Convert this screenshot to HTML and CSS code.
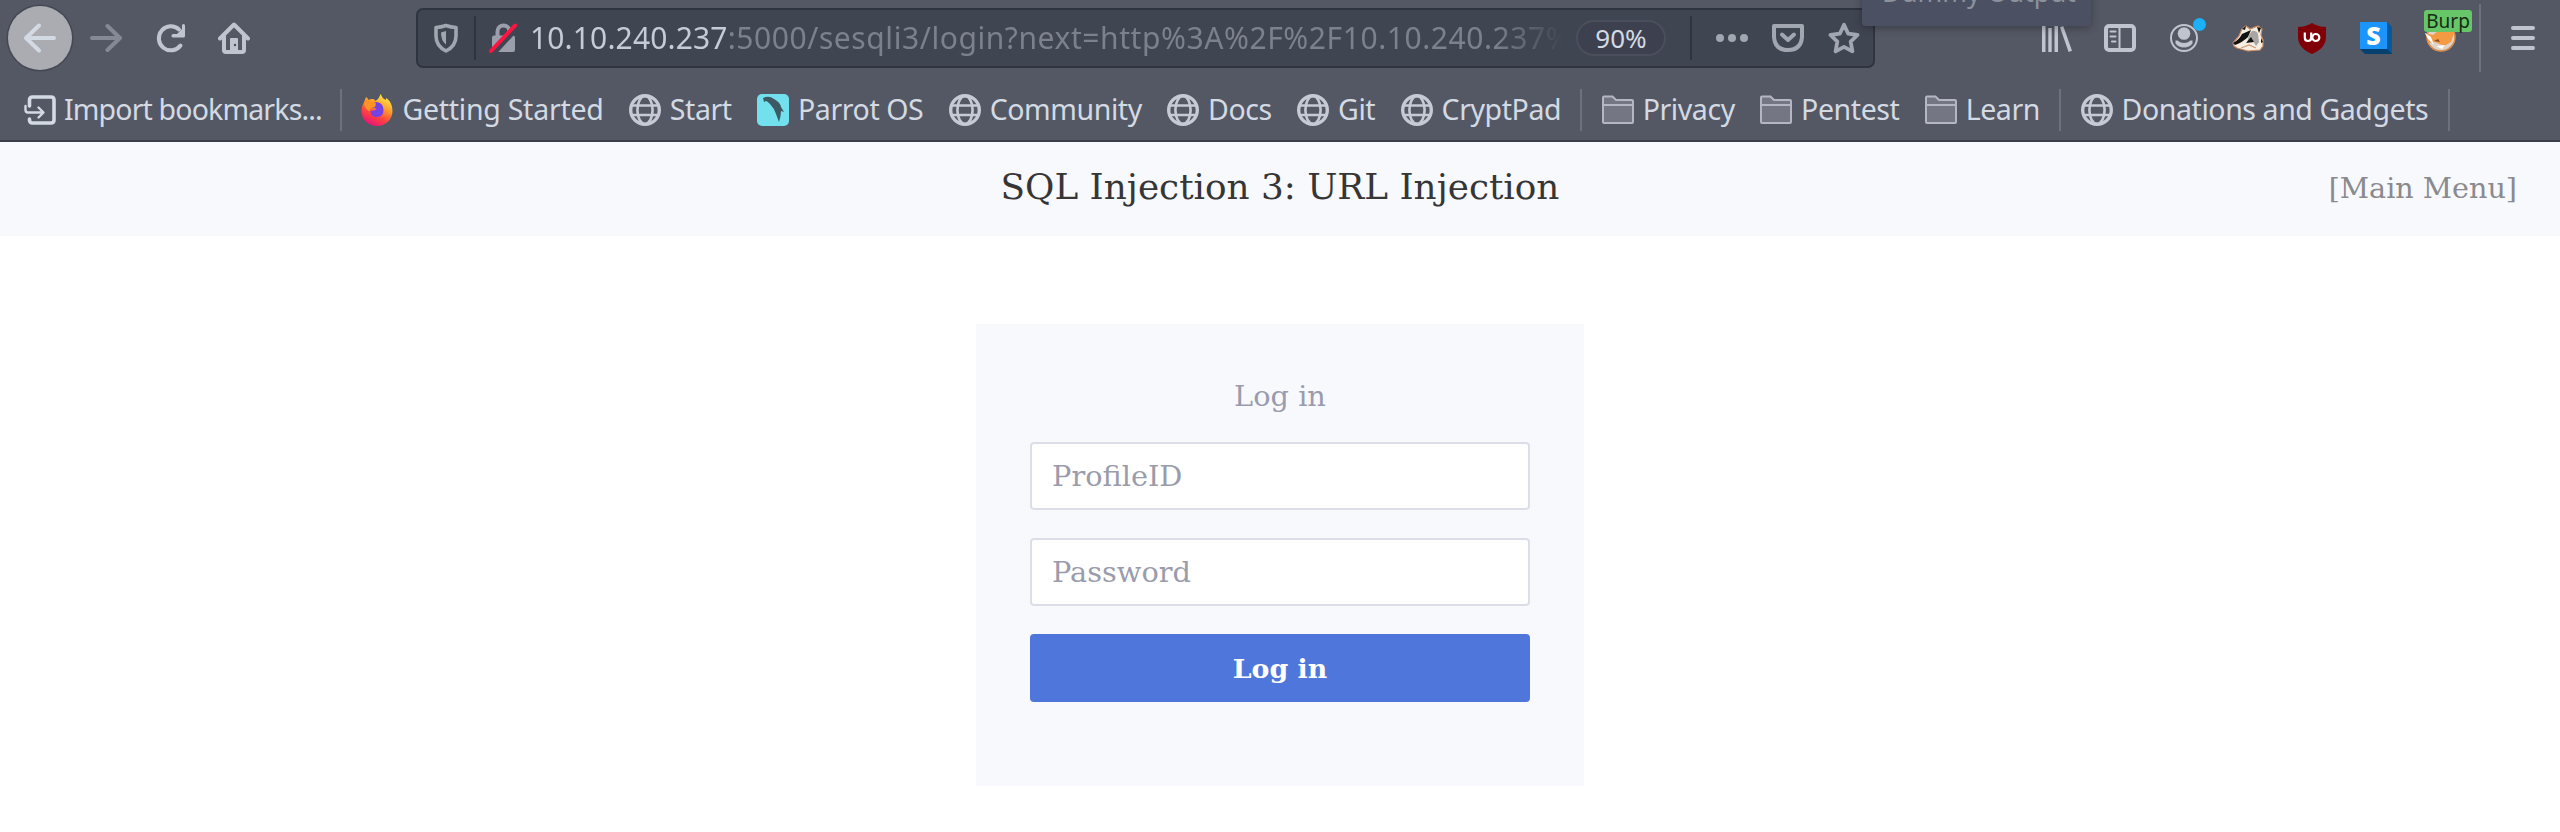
FILE: index.html
```html
<!DOCTYPE html>
<html lang="en">
<head>
<meta charset="utf-8">
<title>SQL Injection 3: URL Injection</title>
<link rel="stylesheet" href="styles.css">
</head>
<body>
<svg class="defs" width="0" height="0" aria-hidden="true">
  <symbol id="globe" viewBox="0 0 32 32"><g fill="none" stroke="currentColor"><circle cx="16" cy="16" r="14.3" stroke-width="3.4"/><ellipse cx="16" cy="16" rx="7.6" ry="14" stroke-width="2.6"/><path d="M2 11.500h28M2 21h28" stroke-width="2.400"/></g></symbol>
  <symbol id="folder" viewBox="0 0 32 32"><path d="M1 28V3.500q0-1 1-1h8.500l3.500 3.500h16q1 0 1 1V28q0 1-1 1H2q-1 0-1-1z" fill="#747783"/><path d="M1 28V3.500q0-1 1-1h8.500l3.500 3.500h16q1 0 1 1V28q0 1-1 1H2q-1 0-1-1zM1 11h30" fill="none" stroke="#b4b7c2" stroke-width="2"/></symbol>
</svg>
<header class="chrome">
  <div class="toolbar">
    <div class="nav">
      <span class="back"><svg width="64" height="64" viewBox="0 0 64 64" fill="none" stroke="#d3dae3" stroke-width="4" stroke-linecap="round" stroke-linejoin="round"><path d="M46 32H18M31 19.500L18 32l13 12.500"/></svg></span>
      <svg class="forward" width="32" height="32" viewBox="0 0 32 32" fill="none" stroke="#858995" stroke-width="4" stroke-linecap="round" stroke-linejoin="round"><path d="M2 16h28M17.500 4L30 16 17.500 28"/></svg>
      <svg class="reload" width="32" height="32" viewBox="0 0 32 32"><path d="M25.500 23.500A12 12 0 1 1 24 7.500" fill="none" stroke="#c0c4cf" stroke-width="4" stroke-linecap="round"/><path d="M28.500 2q1.500 0 1.500 1.500V14q0 1.500-1.500 1.500H18q-2 0-1.500-2t2-1.500h3.500L27 7V3.500q0-1.500 1.500-1.500z" fill="#c0c4cf"/></svg>
      <svg width="32" height="32" viewBox="0 0 32 32"><path d="M2 16.500L16 2.500l14 14M6 14v14q0 2 2 2h16q2 0 2-2V14" fill="none" stroke="#c0c4cf" stroke-width="4" stroke-linecap="round" stroke-linejoin="round"/><path d="M12 30V17q0-1 1-1h6q1 0 1 1v13z" fill="#c0c4cf"/><circle cx="17" cy="23" r="1.200" fill="#4b4f5a"/></svg>
    </div>
    <div class="urlbar">
      <svg class="shield" width="24" height="30" viewBox="0 0 24 30"><path d="M12 2.500Q17 4.200 22 4.500V13q0 10-10 15Q2 23 2 13V4.500Q7 4.200 12 2.500z" fill="none" stroke="#a2a6b0" stroke-width="3.600" stroke-linejoin="round"/><path d="M12 8v13.500Q7 18 7 9.500z" fill="#a2a6b0"/></svg>
      <span class="urlsep"></span>
      <svg class="lock" width="30" height="32" viewBox="0 0 30 32"><path d="M8.500 15V9.500a6 6 0 0 1 12 0V15" fill="none" stroke="#9a9fab" stroke-width="4"/><rect x="3" y="13.500" width="23" height="16.500" rx="2" fill="#9a9fab"/><path d="M4 32L28 6" stroke="#404552" stroke-width="5"/><path d="M2 29L26 3.500" stroke="#ff1440" stroke-width="4" stroke-linecap="round"/></svg>
      <span class="url"><b>10.10.240.237</b>:5000/sesqli3/login?next=http%3A%2F%2F10.10.240.237%</span>
      <span class="zoom">90%</span>
      <span class="urlsep"></span>
      <svg class="dots" width="32" height="8" viewBox="0 0 32 8" fill="#a2a6b0"><circle cx="4" cy="4" r="4"/><circle cx="16" cy="4" r="4"/><circle cx="28" cy="4" r="4"/></svg>
      <svg class="pocket" width="32" height="32" viewBox="0 0 32 32" fill="none" stroke="#a2a6b0" stroke-width="4" stroke-linecap="round" stroke-linejoin="round"><path d="M2 4h28v11q-1 13-14 13T2 15z"/><path d="M10 12.500l6 5.500 6-5.500"/></svg>
      <svg width="32" height="32" viewBox="0 0 32 32" fill="none" stroke="#a2a6b0" stroke-width="3.800" stroke-linejoin="round"><path d="M16 2.800l4.200 8.900 9.300 1.300-6.800 6.700 1.700 9.700L16 24.800l-8.400 4.600 1.700-9.700L2.500 13l9.300-1.300z"/></svg>
    </div>
    <div class="tools">
      <svg width="32" height="32" viewBox="0 0 32 32" fill="#c0c4cf"><path d="M2 4h3.500v26H2zM8.300 6h3.400v24H8.300zM14.500 4H18v26h-3.500zM20 5.200l3.200-1.200L32 28.800 28.600 30z"/></svg>
      <svg width="32" height="32" viewBox="0 0 32 32"><rect x="2" y="4" width="28" height="24" rx="3" fill="none" stroke="#c0c4cf" stroke-width="4"/><path d="M15.500 4v24" stroke="#c0c4cf" stroke-width="2"/><path d="M6.500 9.500h5M6.500 14.500h5M8 19.500h3.500" stroke="#c0c4cf" stroke-width="2" stroke-linecap="round"/></svg>
      <span class="account"><svg width="32" height="32" viewBox="0 0 32 32"><circle cx="16" cy="16" r="13" fill="none" stroke="#c0c4cf" stroke-width="2"/><circle cx="16" cy="11.500" r="6.300" fill="#c0c4cf"/><path d="M7.500 18.500h2q3 2.500 6.500 2.500t6.500-2.500h2v3q-3 4-8.500 4t-8.500-4z" fill="#c0c4cf"/></svg><i class="dot"></i></span>
      <svg width="32" height="32" viewBox="0 0 32 32"><path d="M1 21l6-7 3-7 4-3 4 3 8-3 4 3-1 6 2 5v6l-3 4-12 1-11-3-3-2z" fill="#f6eee3" stroke="#c98b62" stroke-width="1.200"/><path d="M1 21q6-3 9-9l9-4-3 7q-5 5-13 8z" fill="#111"/><path d="M20 9q4-1 6 3l1 8-3 4-4-7-5 4 2-8z" fill="#a8a5a3"/><path d="M19 15l-5 6 8-1zM10 7l4-3-1 4zM25 5l4 1-2 5zM29 16l2 4-2 1z" fill="#171513"/><path d="M9 26l8-3 7 3" fill="none" stroke="#d09a72" stroke-width="1.300"/></svg>
      <svg width="32" height="32" viewBox="0 0 32 32"><path d="M16 1q7 4 14 4v10q0 11-14 17Q2 26 2 15V5q7 0 14-4z" fill="#800008"/><path d="M8.800 10.500v5q0 3.500 3.200 3.500t3.200-3.500v-5" fill="none" stroke="#fff" stroke-width="2.200"/><circle cx="19.800" cy="15.500" r="3.500" fill="none" stroke="#fff" stroke-width="2.200"/></svg>
      <span class="stylus"><svg width="32" height="32" viewBox="0 0 32 32"><path d="M27 0l5 5v27H5l-5-5z" fill="#07599b"/><path d="M5 32l-5-5h27l5 5z" fill="#06406f"/><path d="M0 0h27v27H0z" fill="#1b95fb"/></svg><b>S</b></span>
      <span class="foxy"><svg width="34" height="32" viewBox="0 0 34 32"><circle cx="17" cy="15" r="14" fill="#ddd3c8" stroke="#d98c4c" stroke-width="1.500"/><path d="M1 11l8 2 5-4 11 1 6-2-4 12-7 4-9-4-6 1z" fill="#f39a42"/><path d="M1 11l6 4 3 8-6-6zM12 24l9-1-3 4z" fill="#fff"/><path d="M10 19l4-2 2 3z" fill="#8c4a20"/></svg><b class="badge">Burp</b></span>
      <span class="toolsep"></span>
      <svg width="24" height="24" viewBox="0 0 24 24" stroke="#c0c4cf" stroke-width="4" stroke-linecap="round"><path d="M2 2h20M2 12h20M2 22h20"/></svg>
    </div>
    <div class="tip">Dummy Output</div>
  </div>
  <nav class="bookmarks">
    <span class="bm import"><svg width="32" height="32" viewBox="0 0 32 32" fill="none" stroke="#d3dae3" stroke-linecap="round" stroke-linejoin="round"><path d="M5.500 12V6q0-3 3-3H27q3 0 3 3v20q0 3-3 3H8.500q-3 0-3-3v-1" stroke-width="3.600"/><path d="M1.500 12v4q0 2.500 2.500 2.500h15M14.500 13.500l5 5-5 5" stroke-width="2.400"/></svg><span>Import bookmarks...</span></span>
    <span class="bmsep"></span>
    <span class="bm wide"><svg width="32" height="32" viewBox="0 0 32 32"><defs><linearGradient id="fx" x1=".8" y1="0" x2=".3" y2="1"><stop offset="0" stop-color="#fff44f"/><stop offset=".4" stop-color="#ff9a2b"/><stop offset=".7" stop-color="#ff4040"/><stop offset="1" stop-color="#e5117f"/></linearGradient></defs><path d="M19.500 0q1.500 4 5 6l1-2q6 5 6 13c0 8-6.500 15-15.500 15S.5 25.500.5 17q0-5 2.500-9l2-5q2 1 2.500 3 2-1.500 5-1l2 2q3.500-2 5-7z" fill="url(#fx)"/><path d="M9.500 11q4-4 8-2.500 5 1.500 5 7.500 0 7-6.500 7T9.500 17l3-.5q2 0 3-2l-3-.5q-3 0-3-3z" fill="#7542e5"/><path d="M3 9q3-3.500 7-2 3 .5 5 2.500l-1 3.500-5 1.500-.5 3Q4 15 3 9z" fill="#ff9425"/></svg><span>Getting Started</span></span>
    <span class="bm"><svg width="32" height="32"><use href="#globe"/></svg><span>Start</span></span>
    <span class="bm"><svg width="32" height="32" viewBox="0 0 32 32"><rect width="32" height="32" rx="5" fill="#73e0ee"/><path d="M6 4q6-3 11 1 6 3 7 8l3 5-3-1q0 5-2 11l-3-8q-2-6-6-10-3-3-4-3l-2 1z" fill="#3c5964"/></svg><span>Parrot OS</span></span>
    <span class="bm"><svg width="32" height="32"><use href="#globe"/></svg><span>Community</span></span>
    <span class="bm"><svg width="32" height="32"><use href="#globe"/></svg><span>Docs</span></span>
    <span class="bm"><svg width="32" height="32"><use href="#globe"/></svg><span>Git</span></span>
    <span class="bm"><svg width="32" height="32"><use href="#globe"/></svg><span>CryptPad</span></span>
    <span class="bmsep"></span>
    <span class="bm"><svg width="32" height="32"><use href="#folder"/></svg><span>Privacy</span></span>
    <span class="bm"><svg width="32" height="32"><use href="#folder"/></svg><span>Pentest</span></span>
    <span class="bm"><svg width="32" height="32"><use href="#folder"/></svg><span>Learn</span></span>
    <span class="bmsep"></span>
    <span class="bm"><svg width="32" height="32"><use href="#globe"/></svg><span>Donations and Gadgets</span></span>
    <span class="bmsep"></span>
  </nav>
</header>
<div class="pagehead"><h1>SQL Injection 3: URL Injection</h1><a class="menu">[Main Menu]</a></div>
<main>
  <form class="card">
    <h2>Log in</h2>
    <input class="field" type="text" placeholder="ProfileID">
    <input class="field" type="password" placeholder="Password">
    <button class="submit" type="button">Log in</button>
  </form>
</main>
</body>
</html>
```
FILE: styles.css
```css
* { box-sizing: border-box; }
body { margin: 0; background: #fff; font-family: "DejaVu Serif", serif; overflow: hidden; }
svg { flex: none; display: block; }
.defs { position: absolute; }
.chrome { height: 142px; background: #545864; border-bottom: 2px solid #3b3f4a; font-family: "Noto Sans", sans-serif; color: #d3dae3; overflow: hidden; position: relative; }
.toolbar { height: 76px; display: flex; align-items: center; padding-left: 8px; }
.nav { display: flex; align-items: center; width: 408px; }
.back { width: 64px; height: 64px; border-radius: 50%; background: #aaacb1; box-shadow: 0 0 0 1.500px #444853; }
.forward { margin-left: 18px; }
.reload { margin: 0 31px 0 33px; }
.urlbar { width: 1459px; height: 60px; border: 2px solid #2f343f; border-radius: 7px; background: #404552; display: flex; align-items: center; padding-left: 16px; flex: none; }
.urlsep { width: 2px; height: 44px; background: #2f343f; flex: none; }
.shield { margin-right: 16px; }
.lock { margin: 0 11px 0 13px; }
.url { font-size: 30px; line-height: 44px; width: 1042px; letter-spacing: .57px; color: #7c818c; white-space: nowrap; flex: none; -webkit-mask-image: linear-gradient(90deg, #000 965px, transparent 1034px); mask-image: linear-gradient(90deg, #000 965px, transparent 1034px); }
.url b { font-weight: 400; letter-spacing: .15px; color: #c6cbd5; }
.zoom { width: 90px; height: 36px; margin: 0 24px 0 4px; border: 2px solid #4b4f5b; border-radius: 18px; background: #3d404e; font-size: 26px; line-height: 32px; text-align: center; flex: none; }
.dots { margin: 0 24px; }
.pocket { margin-right: 24px; }
.tools { display: flex; align-items: center; gap: 32px; margin-left: 165px; }
.account { position: relative; }
.dot { position: absolute; left: 25px; top: -4px; width: 13px; height: 13px; border-radius: 50%; background: #1cb0f6; }
.stylus, .foxy { position: relative; }
.stylus b { position: absolute; left: 0; top: 0; width: 27px; text-align: center; font-size: 25px; line-height: 27px; color: #fff; font-family: "Open Sans", sans-serif; font-weight: 800; }
.foxy { width: 32px; margin-right: -9px; }
.badge { position: absolute; left: 0; top: -12px; width: 48px; height: 22px; border-radius: 3px; background: #67c667; color: #162b16; font-size: 19px; line-height: 22px; font-weight: 400; text-align: center; }
.toolsep { width: 2px; height: 68px; background: #6e717c; margin-right: -2px; }
.tip { position: absolute; left: 1862px; top: -30px; width: 229px; height: 56px; background: #4b5162; border-radius: 4px; box-shadow: 0 2px 8px rgba(0,0,0,.3); color: #8d919d; font-size: 26.400px; line-height: 44px; padding-left: 20px; white-space: nowrap; }
.bookmarks { display: flex; align-items: center; height: 68px; padding-left: 24px; gap: 25.300px; font-size: 28.500px; letter-spacing: -.42px; white-space: nowrap; }
.bm { display: flex; align-items: center; gap: 9px; line-height: 40px; }
.bm svg { color: #c6cad4; }
.bm span { padding-bottom: 2px; }
.import { gap: 8px; margin-right: -1px; letter-spacing: -.85px; }
.wide { letter-spacing: -.25px; }
.bmsep { width: 2px; height: 42px; background: #6e717c; margin: 0 -6px; flex: none; }
.pagehead { height: 94px; background: #f8f9fd; position: relative; display: flex; align-items: center; justify-content: center; }
.pagehead h1 { margin: 0; padding-bottom: 5px; font-size: 35.800px; font-weight: 400; color: #363636; }
.menu { position: absolute; right: 43px; top: 28px; font-size: 28.600px; color: #8a8a8f; line-height: 36px; }
main { display: flex; justify-content: center; padding-top: 88px; }
.card { width: 608px; height: 462px; background: #f8f9fd; padding: 48px 54px 0; display: flex; flex-direction: column; }
.card h2 { margin: 0 0 22px; font-size: 28.800px; line-height: 48px; font-weight: 400; color: #9a9cae; text-align: center; }
.field { height: 68px; margin: 0 0 28px; border: 2px solid #dbdde9; border-radius: 4px; background: #fff; padding: 0 20px; font: 28.800px "DejaVu Serif", serif; }
.field::placeholder { color: #9a9cab; opacity: 1; }
.submit { height: 68px; border: 0; border-radius: 4px; background: #4f76db; color: #fff; font: bold 26.800px "DejaVu Serif", serif; padding-top: 2px; }
```
